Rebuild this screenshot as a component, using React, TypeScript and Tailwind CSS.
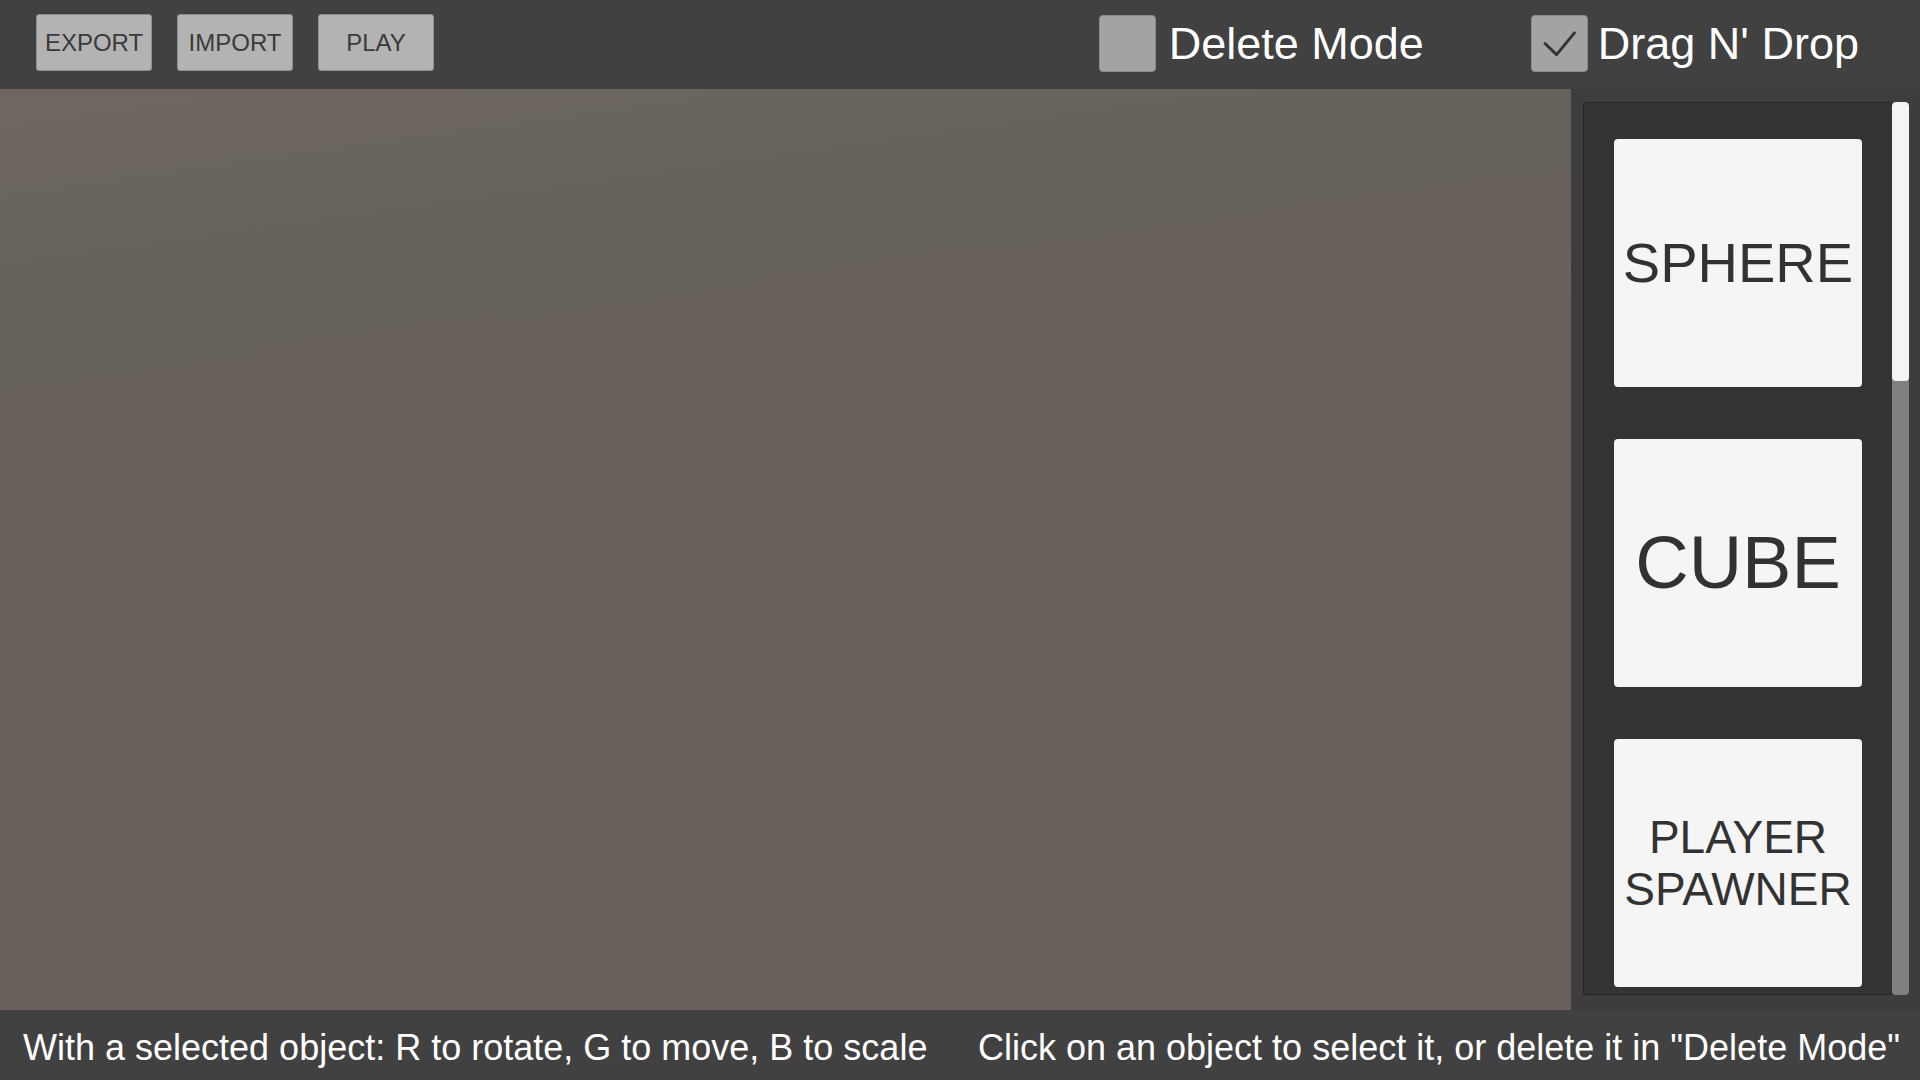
import React from 'react';

const font = { fontFamily: '"Liberation Sans", Arial, sans-serif' };

function ToolButton({ label }: { label: string }) {
  return (
    <button className="w-[116px] h-[57px] rounded-[3px] border border-[#8f8f8f] bg-[#b3b3b3] text-[24px] text-[#3a3a3a] leading-none">
      {label}
    </button>
  );
}

function Toggle({ label, checked }: { label: string; checked?: boolean }) {
  return (
    <div className={`flex items-center ${checked ? 'gap-[10px]' : 'gap-[13px]'}`}>
      <div className="w-[57px] h-[57px] rounded-[4px] border border-[#8c8c8c] bg-[#a3a3a3] flex items-center justify-center">
        {checked && (
          <svg width="57" height="57" viewBox="0 0 57 57" fill="none">
            <path d="M13.5 28.5 L25.5 40 L44 17.5" stroke="#333333" strokeWidth="3" strokeLinecap="round" strokeLinejoin="round" />
          </svg>
        )}
      </div>
      <span className="text-[45px] text-white leading-none">{label}</span>
    </div>
  );
}

function Card({ children, size }: { children: React.ReactNode; size: string }) {
  return (
    <div className={`w-[248px] h-[248px] shrink-0 rounded-[4px] bg-[#f5f5f5] flex items-center justify-center text-center text-[#323232] ${size}`}>
      {children}
    </div>
  );
}

export default function App() {
  return (
    <div className="w-[1920px] h-[1080px] flex flex-col bg-[#414141] overflow-hidden" style={font}>
      {/* top toolbar */}
      <div className="h-[89px] shrink-0 flex items-start pt-[14px] pl-[36px] pr-[61px]">
        <div className="flex gap-[25px]">
          <ToolButton label="EXPORT" />
          <ToolButton label="IMPORT" />
          <ToolButton label="PLAY" />
        </div>
        <div className="ml-auto mt-[1px] flex items-center gap-[107px]">
          <Toggle label="Delete Mode" />
          <Toggle label="Drag N' Drop" checked />
        </div>
      </div>

      {/* scene + palette */}
      <div className="flex-1 flex min-h-0">
        <div className="w-[1571px] h-full bg-[linear-gradient(172deg,#6e6661_0%,#67625c_18%,#6a615c_40%,#6a615c_100%)]" />
        <div className="flex-1 bg-[#3d3d3d] pl-[12px] pt-[13px] pb-[15px] pr-[11px] flex">
          <div className="w-[309px] h-full rounded-l-[3px] border-t border-l border-b border-[#262626] bg-[#333333] pl-[30px] pt-[36px] flex flex-col gap-[52px] overflow-hidden">
            <Card size="text-[56px] leading-none">SPHERE</Card>
            <Card size="text-[74px] leading-none">CUBE</Card>
            <Card size="text-[46px] leading-[52px]">
              PLAYER
              <br />
              SPAWNER
            </Card>
          </div>
          <div className="w-[17px] h-full rounded-[4px] bg-[#808080] flex flex-col overflow-hidden">
            <div className="h-[279px] rounded-[4px] bg-[#f4f4f4]" />
          </div>
        </div>
      </div>

      {/* hint bar */}
      <div className="h-[70px] shrink-0 flex items-center justify-between pt-[6px] pl-[23px] pr-[20px] text-[36px] text-white">
        <span>With a selected object: R to rotate, G to move, B to scale</span>
        <span>Click on an object to select it, or delete it in "Delete Mode"</span>
      </div>
    </div>
  );
}
